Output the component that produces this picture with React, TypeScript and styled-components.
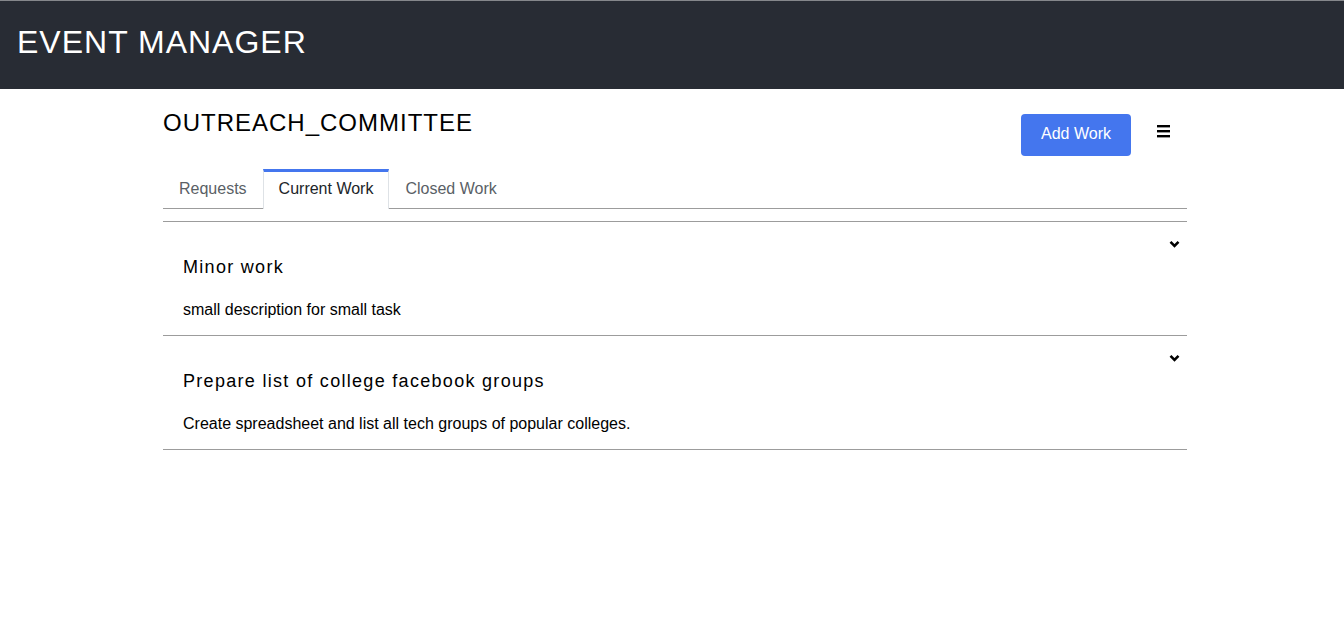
import styled, { createGlobalStyle } from 'styled-components'

const GlobalStyle = createGlobalStyle`
  body {
    margin: 0;
    background: #fff;
    font-family: 'Liberation Sans', Arial, sans-serif;
    color: #000;
  }
`

const Header = styled.header`
  height: 88px;
  background: #282c34;
  border-top: 1px solid #85878b;
  display: flex;
  align-items: center;
  padding: 0 18px;
`

const Brand = styled.h1`
  margin: 0;
  color: #fff;
  font-size: 32px;
  font-weight: normal;
  letter-spacing: 1px;
  padding-bottom: 6px;
  margin-left: -1px;
`

const Container = styled.main`
  width: 1024px;
  margin-left: 163px;
`

const TopRow = styled.div`
  display: flex;
  justify-content: space-between;
  align-items: flex-start;
  padding-top: 20px;
`

const Title = styled.h2`
  margin: 0;
  font-size: 24px;
  font-weight: normal;
  letter-spacing: 1px;
  line-height: 28px;
`

const Actions = styled.div`
  display: flex;
  align-items: flex-start;
  gap: 26px;
  margin-top: 5px;
  padding-right: 17px;
`

const AddButton = styled.button`
  width: 110px;
  height: 42px;
  padding: 0 0 2px;
  border: none;
  border-radius: 4px;
  background: #4476ee;
  color: #fff;
  font-family: 'Liberation Sans', Arial, sans-serif;
  font-size: 16px;
  cursor: pointer;
`

const MenuButton = styled.button`
  border: none;
  background: none;
  padding: 0;
  margin-top: 11px;
  display: flex;
  flex-direction: column;
  gap: 3px;
  width: 13px;
  cursor: pointer;
`

const MenuBar = styled.span`
  display: block;
  height: 2px;
  background: #000;
  box-shadow: 0 1px 0 #999;
`

const Tabs = styled.nav`
  display: flex;
  margin-top: 13px;
  border-bottom: 1px solid #9c9c9c;
`

const Tab = styled.button<{ active?: boolean }>`
  height: 40px;
  padding: 0 16px 4px;
  margin-bottom: -1px;
  font-family: 'Liberation Sans', Arial, sans-serif;
  font-size: 16px;
  background: transparent;
  cursor: pointer;
  border: none;
  border-top: 3px solid transparent;
  color: #5a5f66;
  ${p => p.active && `
    padding: 0 15px 4px;
    background: #fff;
    color: #212529;
    border-left: 1px solid #dee2e6;
    border-right: 1px solid #dee2e6;
    border-top-color: #4476ee;
  `}
`

const WorkList = styled.section`
  margin-top: 12px;
  border-top: 1px solid #9c9c9c;
`

const WorkItem = styled.article`
  border-bottom: 1px solid #9c9c9c;
  padding: 10px 0 16px 20px;
`

const ToggleRow = styled.div`
  display: flex;
  justify-content: flex-end;
  align-items: center;
  height: 24px;
  padding-right: 7px;
`

const WorkTitle = styled.h3`
  margin: 0;
  font-size: 18px;
  font-weight: normal;
  letter-spacing: 1.3px;
  line-height: 22px;
`

const WorkDesc = styled.p`
  margin: 23px 0 0;
  font-size: 16px;
  line-height: 18px;
`

const Chevron = () => (
  <svg width="11" height="8" viewBox="0 0 11 8">
    <path d="M1.5 1.8 L5.5 5.8 L9.5 1.8" fill="none" stroke="#000" strokeWidth="2.6" />
  </svg>
)

const works = [
  { title: 'Minor work', desc: 'small description for small task' },
  { title: 'Prepare list of college facebook groups', desc: 'Create spreadsheet and list all tech groups of popular colleges.' },
]

export default function App() {
  return (
    <>
      <GlobalStyle />
      <Header>
        <Brand>EVENT MANAGER</Brand>
      </Header>
      <Container>
        <TopRow>
          <Title>OUTREACH_COMMITTEE</Title>
          <Actions>
            <AddButton>Add Work</AddButton>
            <MenuButton aria-label="menu">
              <MenuBar />
              <MenuBar />
              <MenuBar />
            </MenuButton>
          </Actions>
        </TopRow>
        <Tabs>
          <Tab>Requests</Tab>
          <Tab active>Current Work</Tab>
          <Tab>Closed Work</Tab>
        </Tabs>
        <WorkList>
          {works.map(w => (
            <WorkItem key={w.title}>
              <ToggleRow>
                <Chevron />
              </ToggleRow>
              <WorkTitle>{w.title}</WorkTitle>
              <WorkDesc>{w.desc}</WorkDesc>
            </WorkItem>
          ))}
        </WorkList>
      </Container>
    </>
  )
}
